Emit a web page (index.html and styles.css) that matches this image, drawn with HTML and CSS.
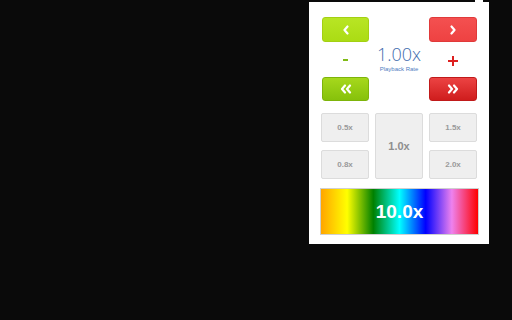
FILE: index.html
```html
<!DOCTYPE html>
<html>
<head>
<meta charset="utf-8">
<link rel="stylesheet" href="styles.css">
</head>
<body>
<div class="panel">
  <div class="tab"></div>
  <div class="controls">
    <button class="btn green">
      <svg width="8" height="10" viewBox="0 0 8 10"><polyline points="5.5,1.5 2.5,5 5.5,8.5" fill="none" stroke="#fff" stroke-width="2.2" stroke-linecap="round" stroke-linejoin="round"/></svg>
    </button>
    <div class="rate">
      <div class="rate-value">1.00x</div>
      <div class="rate-label">Playback Rate</div>
    </div>
    <button class="btn red">
      <svg width="8" height="10" viewBox="0 0 8 10"><polyline points="2.5,1.5 5.5,5 2.5,8.5" fill="none" stroke="#fff" stroke-width="2.2" stroke-linecap="round" stroke-linejoin="round"/></svg>
    </button>
    <div class="sign"><span class="minus"></span></div>
    <div class="sign"><span class="plus"></span></div>
    <button class="btn green-dark">
      <svg width="14" height="10" viewBox="0 0 14 10"><polyline points="6,1.5 3,5 6,8.5" fill="none" stroke="#fff" stroke-width="2.2" stroke-linecap="round" stroke-linejoin="round"/><polyline points="11,1.5 8,5 11,8.5" fill="none" stroke="#fff" stroke-width="2.2" stroke-linecap="round" stroke-linejoin="round"/></svg>
    </button>
    <button class="btn red-dark">
      <svg width="14" height="10" viewBox="0 0 14 10"><polyline points="3,1.5 6,5 3,8.5" fill="none" stroke="#fff" stroke-width="2.2" stroke-linecap="round" stroke-linejoin="round"/><polyline points="8,1.5 11,5 8,8.5" fill="none" stroke="#fff" stroke-width="2.2" stroke-linecap="round" stroke-linejoin="round"/></svg>
    </button>
  </div>
  <div class="presets">
    <button class="preset">0.5x</button>
    <button class="preset big">1.0x</button>
    <button class="preset">1.5x</button>
    <button class="preset">0.8x</button>
    <button class="preset">2.0x</button>
  </div>
  <button class="rainbow">10.0x</button>
</div>
</body>
</html>
```
FILE: styles.css
```css
html, body {
  margin: 0;
  padding: 0;
  background: #0a0a0a;
  width: 512px;
  height: 320px;
  overflow: hidden;
}
body {
  display: flex;
  align-items: flex-start;
  font-family: "Liberation Sans", Arial, sans-serif;
}
.panel {
  position: relative;
  margin: 2px 0 0 309px;
  width: 155px;
  padding: 15px 12px 9px 13px;
  background: #fff;
  display: flex;
  flex-direction: column;
}
.tab {
  position: absolute;
  top: -2px;
  right: 6px;
  width: 8px;
  height: 2px;
  background: #fff;
}
.controls {
  display: grid;
  grid-template-columns: 47px 48px 48px;
  grid-template-rows: 25px 35px 24px;
  column-gap: 6px;
}
.btn {
  margin: 0;
  padding: 0;
  border-radius: 3px;
  display: flex;
  align-items: center;
  justify-content: center;
  box-sizing: border-box;
}
.btn svg { display: block; }
.green {
  grid-column: 1; grid-row: 1;
  background: linear-gradient(#b8e524, #abdc14);
  border: 1px solid #a3d013;
}
.red {
  grid-column: 3; grid-row: 1;
  background: linear-gradient(#f45050, #ee4242);
  border: 1px solid #e03a3a;
}
.green-dark {
  grid-column: 1; grid-row: 3;
  background: linear-gradient(#a6d81c, #86c10b);
  border: 1px solid #7db40a;
}
.red-dark {
  grid-column: 3; grid-row: 3;
  background: linear-gradient(#ec4343, #cf1d1d);
  border: 1px solid #c01a1a;
}
.rate {
  grid-column: 2;
  grid-row: 2;
  display: flex;
  flex-direction: column;
  align-items: center;
  padding-top: 2px;
}
.rate-value {
  font-family: "Open Sans", sans-serif;
  font-weight: 300;
  font-size: 18px;
  line-height: 20px;
  color: #3f6cae;
}
.rate-label {
  font-family: "Liberation Sans", Arial, sans-serif;
  font-size: 6px;
  line-height: 8px;
  margin-top: 1px;
  color: #4f7dbf;
}
.sign {
  grid-row: 2;
  display: flex;
  align-items: center;
  justify-content: center;
}
.controls > .sign:nth-child(4) { grid-column: 1; }
.controls > .sign:nth-child(5) { grid-column: 3; }
.minus {
  display: block;
  width: 5px;
  height: 2px;
  background: #80bb16;
}
.plus {
  position: relative;
  display: block;
  width: 10px;
  height: 10px;
  margin-top: 3px;
}
.plus::before, .plus::after {
  content: "";
  position: absolute;
  background: #dd2020;
}
.plus::before { left: 0; top: 4px; width: 10px; height: 2px; }
.plus::after { left: 4px; top: 0; width: 2px; height: 10px; }
.presets {
  margin-top: 12px;
  display: grid;
  grid-template-columns: 48px 48px 48px;
  grid-template-rows: 29px 29px;
  column-gap: 6px;
  row-gap: 8px;
  margin-left: -1px;
}
.preset {
  margin: 0;
  padding: 0;
  background: #efefef;
  border: 1px solid #dcdcdc;
  border-radius: 2px;
  font-family: "Liberation Sans", Arial, sans-serif;
  font-weight: bold;
  font-size: 8px;
  color: #9a9a9a;
}
.preset.big {
  grid-row: 1 / span 2;
  grid-column: 2;
  font-size: 11px;
  color: #8e8e8e;
}
.rainbow {
  margin: 9px -2px 0 -2px;
  height: 47px;
  padding: 0;
  border: 1px solid #cfcfcf;
  background: linear-gradient(to right, orange, yellow, green, cyan, blue, violet, red);
  color: #fff;
  font-family: "Liberation Sans", Arial, sans-serif;
  font-weight: bold;
  font-size: 19px;
}
```
